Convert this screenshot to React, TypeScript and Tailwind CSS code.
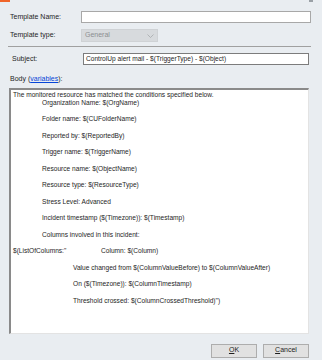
import React from 'react';

const bodyLines: { text: string; indent: string; gap?: boolean }[] = [
  { text: 'The monitored resource has matched the conditions specified below.', indent: 'pl-0' },
  { text: 'Organization Name: $(OrgName)', indent: 'pl-[29px]' },
  { text: 'Folder name: $(CUFolderName)', indent: 'pl-[29px]', gap: true },
  { text: 'Reported by: $(ReportedBy)', indent: 'pl-[29px]', gap: true },
  { text: 'Trigger name: $(TriggerName)', indent: 'pl-[29px]', gap: true },
  { text: 'Resource name: $(ObjectName)', indent: 'pl-[29px]', gap: true },
  { text: 'Resource type: $(ResourceType)', indent: 'pl-[29px]', gap: true },
  { text: 'Stress Level: Advanced', indent: 'pl-[29px]', gap: true },
  { text: 'Incident timestamp ($(Timezone)): $(Timestamp)', indent: 'pl-[29px]', gap: true },
  { text: 'Columns involved in this incident:', indent: 'pl-[29px]', gap: true },
];

const tailLines = [
  'Value changed from $(ColumnValueBefore) to $(ColumnValueAfter)',
  'On ($(Timezone)): $(ColumnTimestamp)',
  'Threshold crossed: $(ColumnCrossedThreshold)")',
];

export default function App() {
  return (
    <div className="w-[322px] h-[360px] bg-[#e9edf1] flex flex-col text-[#1e1e1e] overflow-hidden" style={{ fontFamily: '"Liberation Sans", Arial, sans-serif' }}>
      <div className="flex justify-between h-[2px]">
        <div className="w-[10px] bg-[#f0652a]" />
        <div className="w-[4px] mr-[9px] bg-[#9aa0a6]" />
      </div>

      {/* template name */}
      <div className="flex items-center mt-[9px] pl-[10px] text-[7px]">
        <span className="w-[71px]">Template Name:</span>
        <div className="w-[230px] h-[12px] bg-white border border-[#a8a8a8]" />
      </div>

      {/* template type */}
      <div className="flex items-center mt-[6px] pl-[10px] text-[7px]">
        <span className="w-[71px]">Template type:</span>
        <div className="w-[77px] h-[13px] bg-[#d7dadd] border border-[#cfd2d5] flex items-center justify-between px-[3px] text-[#8c8f92]">
          <span>General</span>
          <svg width="7" height="4" viewBox="0 0 7 4"><path d="M0.5 0.5 L3.5 3.5 L6.5 0.5" fill="none" stroke="#a6a9ac" strokeWidth="0.8" /></svg>
        </div>
      </div>

      <div className="mt-[4px] ml-[8px] w-[303px] h-px bg-[#a0a0a0]" />

      {/* subject */}
      <div className="flex items-center mt-[6px] pl-[12px] text-[7px]">
        <span className="w-[71px]">Subject:</span>
        <div className="w-[226px] h-[12px] bg-white border border-[#7c7c7c] flex items-center px-[2px] text-[6.6px]">
          ControlUp alert mail - $(TriggerType) - $(Object)
        </div>
      </div>

      <div className="mt-[9px] pl-[10px] text-[7px]">
        Body (<span className="text-[#0645d8] underline">variables</span>):
      </div>

      {/* body editor */}
      <div className="mt-[3px] ml-[9px] w-[300px] h-[246px] bg-white border-t-2 border-l-2 border-t-[#8a8a8a] border-l-[#8a8a8a] border-r border-b border-r-[#e3e3e3] border-b-[#e3e3e3] pt-[1px] pl-[2px] text-[6.6px] leading-[8.25px] whitespace-nowrap overflow-hidden">
        {bodyLines.map((l, i) => (
          <React.Fragment key={i}>
            {l.gap && <div className="h-[8.25px]" />}
            <div className={l.indent}>{l.text}</div>
          </React.Fragment>
        ))}
        <div className="h-[8.25px]" />
        <div className="flex">
          <span className="w-[88px]">$(ListOfColumns:"</span>
          <span>Column: $(Column)</span>
        </div>
        {tailLines.map((t, i) => (
          <React.Fragment key={i}>
            <div className="h-[8.25px]" />
            <div className="pl-[60px]">{t}</div>
          </React.Fragment>
        ))}
      </div>

      {/* buttons */}
      <div className="flex justify-end gap-[6px] mt-[10px] pr-[13px] text-[7px]">
        <button className="w-[46px] h-[14px] bg-[#e1e1e1] border border-[#adadad] flex items-center justify-center">
          <span><span className="underline">O</span>K</span>
        </button>
        <button className="w-[46px] h-[14px] bg-[#e1e1e1] border border-[#adadad] flex items-center justify-center">
          <span><span className="underline">C</span>ancel</span>
        </button>
      </div>
    </div>
  );
}
